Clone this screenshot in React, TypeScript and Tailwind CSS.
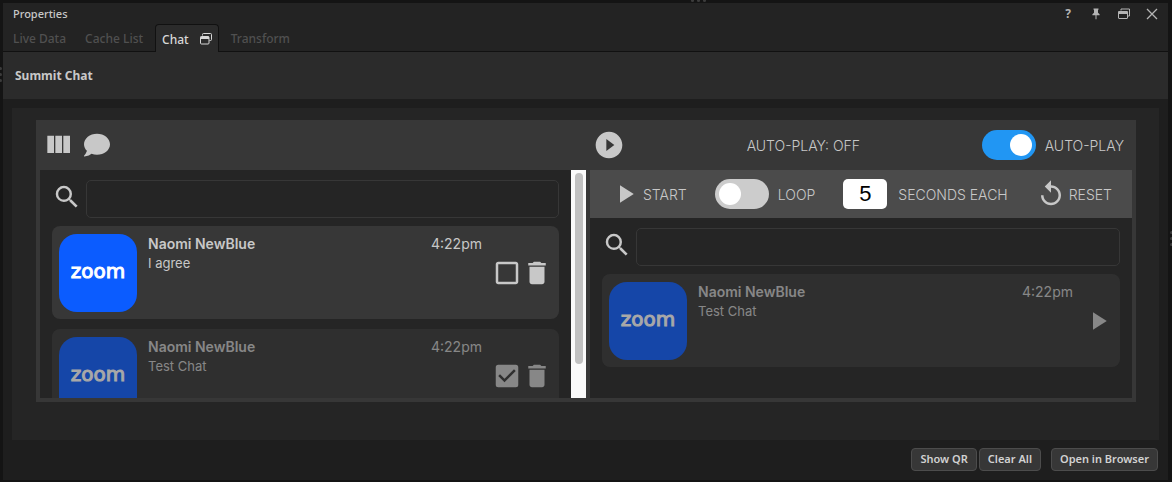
import { useState } from "react";
import type { ReactNode } from "react";
import { FaComment } from "react-icons/fa";
import {
  MdCheckBox,
  MdCheckBoxOutlineBlank,
  MdDelete,
  MdPlayArrow,
  MdPlayCircleFilled,
  MdReplay,
  MdSearch,
} from "react-icons/md";

type ChatMessage = {
  id: number;
  author: string;
  text: string;
  time: string;
  used: boolean;
};

const initialMessages: ChatMessage[] = [
  { id: 1, author: "Naomi NewBlue", text: "I agree", time: "4:22pm", used: false },
  { id: 2, author: "Naomi NewBlue", text: "Test Chat", time: "4:22pm", used: true },
];

function WindowsIcon() {
  return (
    <svg width="12" height="12" viewBox="0 0 12 12" fill="none" aria-hidden="true">
      <path d="M3 2.5V1h8.5v7H10" stroke="currentColor" strokeWidth="1" />
      <rect x="0.5" y="3.5" width="9" height="7" rx="0.5" stroke="currentColor" />
      <path d="M0.5 3h9v3h-9z" fill="currentColor" />
    </svg>
  );
}

function TabWindowsIcon() {
  return (
    <svg width="12" height="12" viewBox="0 0 12 12" fill="none" aria-hidden="true">
      <path d="M2.5 2.5V1.5a1 1 0 0 1 1-1h7a1 1 0 0 1 1 1v5a1 1 0 0 1-1 1h-1" stroke="currentColor" />
      <rect x="0.5" y="3.5" width="8.5" height="7.5" rx="1" stroke="currentColor" />
      <path d="M0.5 3.5h8.5v2.5h-8.5z" fill="currentColor" />
    </svg>
  );
}

function PinIcon() {
  return (
    <svg width="8" height="12" viewBox="0 0 8 12" fill="currentColor" aria-hidden="true">
      <path d="M1.5 0.5h5v1.2H6v3l1.6 1.5v1H4.5v4h-1v-4H0.4v-1L2 4.7V1.7h-.5z" />
    </svg>
  );
}

function CloseIcon() {
  return (
    <svg width="12" height="12" viewBox="0 0 12 12" stroke="currentColor" aria-hidden="true">
      <path d="M1 1l10 10M11 1L1 11" strokeWidth="1.3" />
    </svg>
  );
}

function ColumnsIcon() {
  return (
    <svg width="32" height="32" viewBox="0 0 24 24" fill="currentColor" aria-hidden="true">
      <path d="M10 18h5V5h-5v13zm-6 0h5V5H4v13zM16 5v13h5V5h-5z" />
    </svg>
  );
}

function Dots({ className }: { className: string }) {
  return (
    <div className={`absolute flex gap-[3px] ${className}`} aria-hidden="true">
      <span className="size-[3px] rounded-full bg-[#3c3c3c]" />
      <span className="size-[3px] rounded-full bg-[#3c3c3c]" />
      <span className="size-[3px] rounded-full bg-[#3c3c3c]" />
    </div>
  );
}

function Toggle({
  label,
  checked,
  onChange,
}: {
  label: string;
  checked: boolean;
  onChange: (next: boolean) => void;
}) {
  return (
    <label className="flex items-center gap-[9px]">
      <input
        type="checkbox"
        role="switch"
        checked={checked}
        onChange={(event) => onChange(event.target.checked)}
        className="peer sr-only"
      />
      <span className="flex h-[30px] w-[54px] items-center rounded-full bg-[#ccc] px-1 peer-checked:justify-end peer-checked:bg-[#2196f3]">
        <span className="size-[22px] rounded-full bg-white" />
      </span>
      <span className="pt-0.5 font-light">{label}</span>
    </label>
  );
}

function SearchRow({ label }: { label: string }) {
  return (
    <div className="flex items-start gap-1 px-3 pt-2.5 pb-2">
      <MdSearch size={30} className="mt-0.5 shrink-0" />
      <input
        type="search"
        aria-label={label}
        className="h-[38px] min-w-0 flex-1 rounded-[5px] border border-[#373737] bg-transparent px-2 outline-none"
      />
    </div>
  );
}

function MessageCard({
  message,
  dimmed,
  children,
}: {
  message: ChatMessage;
  dimmed: boolean;
  children: ReactNode;
}) {
  return (
    <li
      className={`flex h-[93px] shrink-0 items-center rounded-lg bg-[#373737] px-[7px] ${
        dimmed ? "opacity-60" : ""
      }`}
    >
      <div className="flex size-[78px] shrink-0 items-center justify-center rounded-[18px] bg-[#0b5cff] pb-1 font-['DejaVu_Sans',sans-serif] text-xl text-white [-webkit-text-stroke:1px_white]">
        zoom
      </div>
      <div className="ml-[11px] min-w-0 flex-1 self-start pt-2">
        <div className="flex justify-between text-sm leading-5">
          <span className="font-semibold">{message.author}</span>
          <time>{message.time}</time>
        </div>
        <p className="text-[13px] leading-[18px]">{message.text}</p>
      </div>
      <div className="ml-2.5 flex items-center">{children}</div>
    </li>
  );
}

function FooterButton({ children }: { children: ReactNode }) {
  return (
    <button
      type="button"
      className="h-[23px] rounded-sm border border-[#4c4c4c] bg-[#373737] px-2 text-[11px] font-semibold text-[#d2d2d2]"
    >
      {children}
    </button>
  );
}

export default function App() {
  const [messages, setMessages] = useState(initialMessages);
  const [autoPlay, setAutoPlay] = useState(true);
  const [loop, setLoop] = useState(false);
  const [seconds, setSeconds] = useState("5");

  function toggleUsed(id: number) {
    setMessages(messages.map((m) => (m.id === id ? { ...m, used: !m.used } : m)));
  }

  function removeMessage(id: number) {
    setMessages(messages.filter((m) => m.id !== id));
  }

  return (
    <div className="relative flex min-h-screen flex-col overflow-hidden bg-[#141414] pt-[3px] pr-1 pb-0.5 pl-[3px] font-['Noto_Sans',sans-serif] text-[#c8c8c8]">
      <Dots className="-top-px left-[59%]" />
      <Dots className="top-[14%] -left-px flex-col" />
      <Dots className="-right-px top-[48%] flex-col" />

      <header className="flex h-[21px] items-center justify-between bg-[#232323] pr-0.5 pl-2.5">
        <h1 className="pt-0.5 text-[11px] font-medium">Properties</h1>
        <div className="flex text-[#b4b4b4]">
          <button type="button" aria-label="Help" className="flex w-7 items-center justify-center text-xs font-bold">
            ?
          </button>
          <button type="button" aria-label="Pin" className="flex w-7 items-center justify-center">
            <PinIcon />
          </button>
          <button type="button" aria-label="Float" className="flex w-7 items-center justify-center">
            <WindowsIcon />
          </button>
          <button type="button" aria-label="Close" className="flex w-7 items-center justify-center">
            <CloseIcon />
          </button>
        </div>
      </header>

      <nav className="flex h-7 bg-[#232323] text-xs font-medium text-[#505050]">
        <button type="button" className="border-b border-[#111] px-2.5 pt-0.5">
          Live Data
        </button>
        <button type="button" className="border-b border-[#111] pt-0.5 pr-3 pl-[9px]">
          Cache List
        </button>
        <button
          type="button"
          className="flex items-center gap-[11px] rounded-t-sm border border-b-0 border-[#111] bg-[#2b2b2b] px-1.5 text-[#d8d8d8]"
        >
          <span className="pt-0.5">Chat</span>
          <TabWindowsIcon />
        </button>
        <button type="button" className="border-b border-[#111] px-3 pt-0.5">
          Transform
        </button>
        <div className="flex-1 border-b border-[#111]" />
      </nav>

      <div className="flex h-[47px] items-center bg-[#2b2b2b] px-3">
        <h2 className="text-xs font-bold">Summit Chat</h2>
      </div>

      <main className="flex flex-1 flex-col bg-[#1e1e1e] px-[9px] pt-[9px]">
        <div className="flex-1 bg-[#252525] pt-3 pr-[23px] pb-9 pl-6 font-['Inter',sans-serif] text-sm">
          <div className="grid grid-cols-2 bg-[#373737] pb-1">
            <section aria-label="Incoming chat" className="min-w-0 pl-1">
              <div className="flex h-[50px] items-center gap-2.5 pl-0.5">
                <button type="button" aria-label="Columns">
                  <ColumnsIcon />
                </button>
                <button type="button" aria-label="Comments">
                  <FaComment size={26} />
                </button>
              </div>
              <div className="flex h-[228px] bg-[#252525]">
                <div className="min-w-0 flex-1 overflow-hidden">
                  <SearchRow label="Search incoming chat" />
                  <ul className="flex flex-col gap-2.5 px-3">
                    {messages.map((message) => (
                      <MessageCard key={message.id} message={message} dimmed={message.used}>
                        <label>
                          <input
                            type="checkbox"
                            aria-label={`Use "${message.text}"`}
                            checked={message.used}
                            onChange={() => toggleUsed(message.id)}
                            className="sr-only"
                          />
                          {message.used ? <MdCheckBox size={30} /> : <MdCheckBoxOutlineBlank size={30} />}
                        </label>
                        <button
                          type="button"
                          aria-label={`Delete "${message.text}"`}
                          onClick={() => removeMessage(message.id)}
                        >
                          <MdDelete size={30} />
                        </button>
                      </MessageCard>
                    ))}
                  </ul>
                </div>
                <div className="w-[15px] shrink-0 bg-[#fafafa] px-1 py-[3px]" aria-hidden="true">
                  <div className="h-[191px] w-2 rounded-full bg-[#c1c1c1]" />
                </div>
              </div>
            </section>

            <section aria-label="Playback" className="min-w-0">
              <div className="flex h-[50px] items-center justify-between pr-3 pl-[7px]">
                <MdPlayCircleFilled size={32} />
                <span className="pt-0.5 font-light">AUTO-PLAY: OFF</span>
                <Toggle label="AUTO-PLAY" checked={autoPlay} onChange={setAutoPlay} />
              </div>
              <div className="mx-1 flex h-[228px] flex-col bg-[#252525]">
                <div className="flex h-12 shrink-0 items-center justify-between bg-[#4b4b4b] px-5">
                  <button type="button" className="flex items-center gap-[3px]">
                    <MdPlayArrow size={30} />
                    <span className="pt-0.5 font-light">START</span>
                  </button>
                  <Toggle label="LOOP" checked={loop} onChange={setLoop} />
                  <label className="flex items-center gap-[11px]">
                    <input
                      type="text"
                      inputMode="numeric"
                      value={seconds}
                      onChange={(event) => setSeconds(event.target.value)}
                      className="h-[30px] w-11 rounded-[5px] bg-white text-center font-['Liberation_Sans',sans-serif] text-[22px] text-black outline-none"
                    />
                    <span className="pt-0.5 font-light">SECONDS EACH</span>
                  </label>
                  <button type="button" className="flex items-center gap-[3px]">
                    <MdReplay size={30} />
                    <span className="pt-0.5 font-light">RESET</span>
                  </button>
                </div>
                <SearchRow label="Search playlist" />
                <ul className="flex flex-col gap-2.5 px-3">
                  {messages
                    .filter((message) => message.used)
                    .map((message) => (
                      <MessageCard key={message.id} message={message} dimmed>
                        <button type="button" aria-label={`Play "${message.text}"`}>
                          <MdPlayArrow size={30} />
                        </button>
                      </MessageCard>
                    ))}
                </ul>
              </div>
            </section>
          </div>
        </div>

        <footer className="flex h-10 items-center justify-end pr-px pb-0.5">
          <div className="mr-2.5 flex gap-0.5">
            <FooterButton>Show QR</FooterButton>
            <FooterButton>Clear All</FooterButton>
          </div>
          <FooterButton>Open in Browser</FooterButton>
        </footer>
      </main>
    </div>
  );
}
